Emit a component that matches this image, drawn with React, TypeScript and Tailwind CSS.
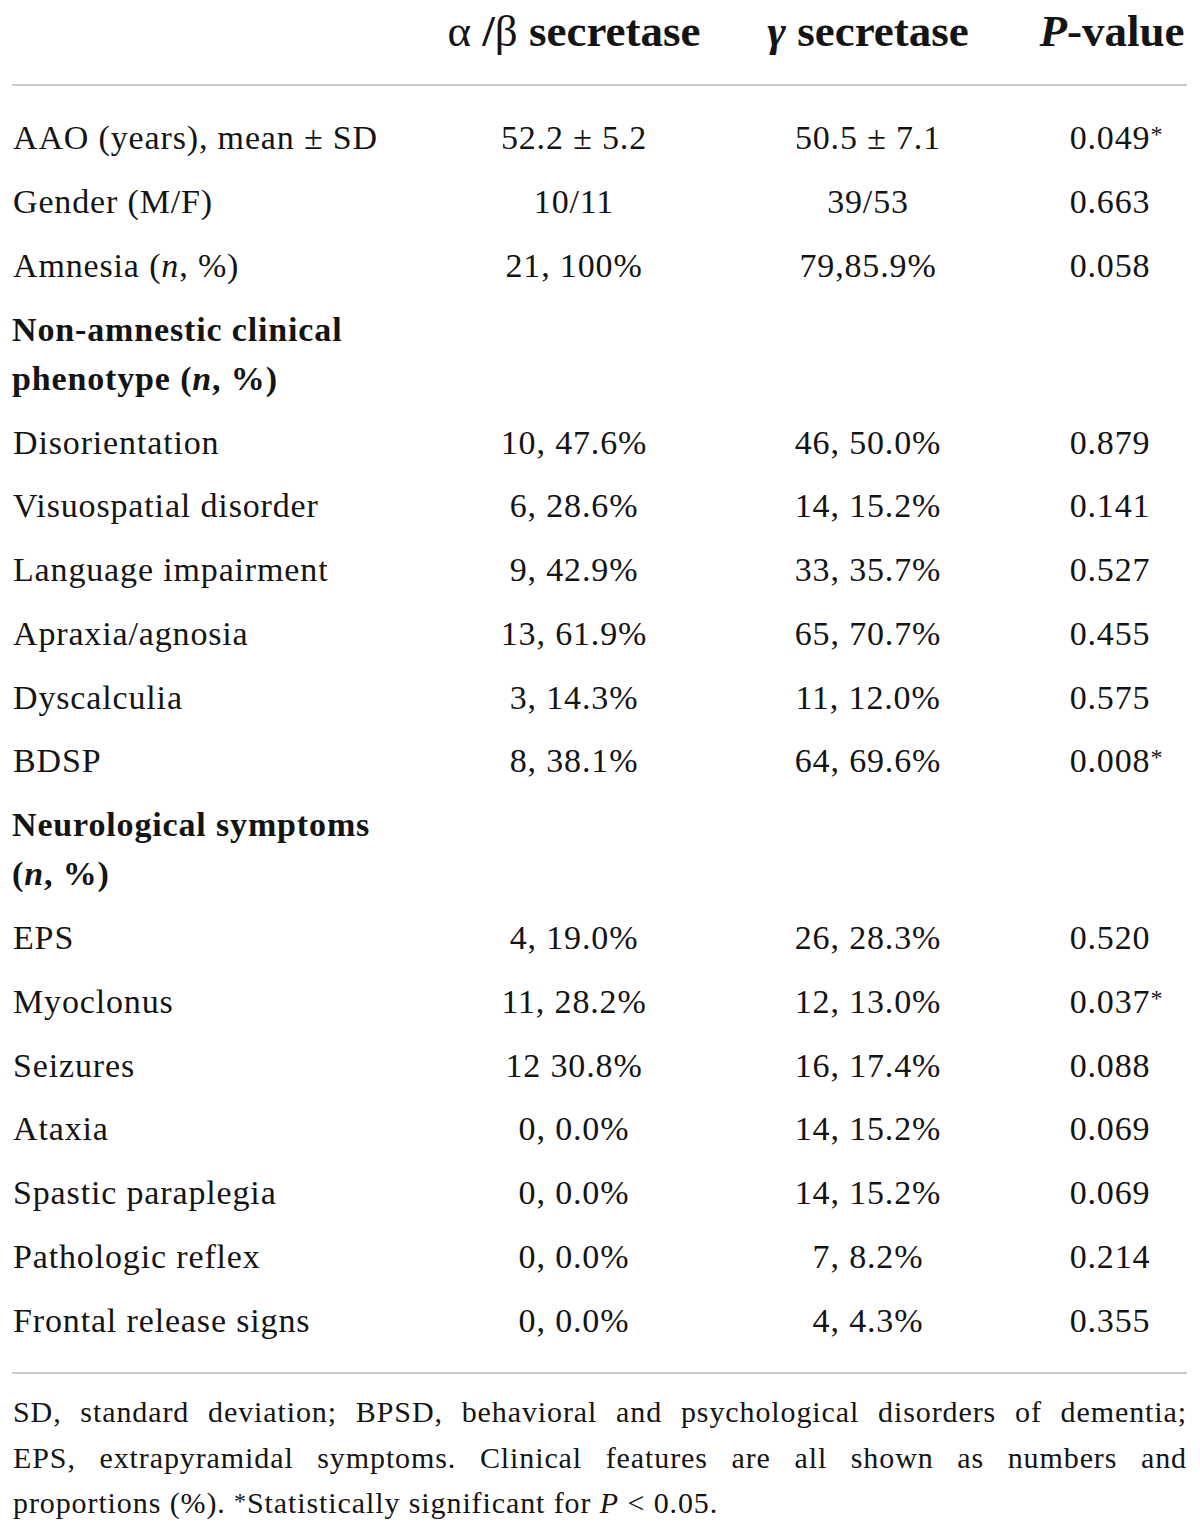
import React from "react";

type Row = {
  label: React.ReactNode;
  a?: string;
  b?: string;
  p?: string;
  star?: boolean;
  section?: boolean;
};

const N = () => <i>n</i>;

const rows: Row[] = [
  { label: "AAO (years), mean ± SD", a: "52.2 ± 5.2", b: "50.5 ± 7.1", p: "0.049", star: true },
  { label: "Gender (M/F)", a: "10/11", b: "39/53", p: "0.663" },
  { label: <>Amnesia (<N />, %)</>, a: "21, 100%", b: "79,85.9%", p: "0.058" },
  {
    label: (
      <>
        Non-amnestic clinical
        <br />
        phenotype (<N />, %)
      </>
    ),
    section: true,
  },
  { label: "Disorientation", a: "10, 47.6%", b: "46, 50.0%", p: "0.879" },
  { label: "Visuospatial disorder", a: "6, 28.6%", b: "14, 15.2%", p: "0.141" },
  { label: "Language impairment", a: "9, 42.9%", b: "33, 35.7%", p: "0.527" },
  { label: "Apraxia/agnosia", a: "13, 61.9%", b: "65, 70.7%", p: "0.455" },
  { label: "Dyscalculia", a: "3, 14.3%", b: "11, 12.0%", p: "0.575" },
  { label: "BDSP", a: "8, 38.1%", b: "64, 69.6%", p: "0.008", star: true },
  {
    label: (
      <>
        Neurological symptoms
        <br />
        (<N />, %)
      </>
    ),
    section: true,
  },
  { label: "EPS", a: "4, 19.0%", b: "26, 28.3%", p: "0.520" },
  { label: "Myoclonus", a: "11, 28.2%", b: "12, 13.0%", p: "0.037", star: true },
  { label: "Seizures", a: "12 30.8%", b: "16, 17.4%", p: "0.088" },
  { label: "Ataxia", a: "0, 0.0%", b: "14, 15.2%", p: "0.069" },
  { label: "Spastic paraplegia", a: "0, 0.0%", b: "14, 15.2%", p: "0.069" },
  { label: "Pathologic reflex", a: "0, 0.0%", b: "7, 8.2%", p: "0.214" },
  { label: "Frontal release signs", a: "0, 0.0%", b: "4, 4.3%", p: "0.355" },
];

export default function App() {
  return (
    <div
      className="w-[1200px] min-h-[1536px] bg-white pl-[12px] pr-[13px] text-[#141414]"
      style={{ fontFamily: '"Liberation Serif", "Times New Roman", serif' }}
    >
      {/* Header */}
      <div className="grid grid-cols-[433px_258px_330px_154px] pb-[21px] text-[45px] font-bold leading-[63px]">
        <div />
        <div className="whitespace-nowrap text-center">
          <span className="font-normal">α</span> /<span className="font-normal">β</span> secretase
        </div>
        <div className="whitespace-nowrap text-center">
          <i>γ</i> secretase
        </div>
        <div className="whitespace-nowrap pl-[4px] text-center">
          <i>P</i>-value
        </div>
      </div>
      <div className="h-[2px] bg-[#cbcbcb]" />

      {/* Body */}
      <div className="pb-[20px] pt-[20px] text-[34px] leading-[49px] tracking-[0.025em]">
        {rows.map((r, i) => (
          <div key={i} className="grid grid-cols-[433px_258px_330px_154px] py-[7.4px]">
            <div className={r.section ? "font-bold" : "pl-px"}>{r.label}</div>
            <div className="whitespace-nowrap text-center">{r.a}</div>
            <div className="whitespace-nowrap text-center">{r.b}</div>
            <div className="whitespace-nowrap text-center">
              {r.p && (
                <span className="relative">
                  {r.p}
                  {r.star && (
                    <span className="absolute left-full top-[-9px] text-[24px]">*</span>
                  )}
                </span>
              )}
            </div>
          </div>
        ))}
      </div>
      <div className="h-[2px] bg-[#cbcbcb]" />

      {/* Footnote */}
      <div className="pt-[15px] pl-px text-[30px] leading-[45.5px] tracking-[0.03em]">
        <div className="text-justify [text-align-last:justify]">
          SD, standard deviation; BPSD, behavioral and psychological disorders of dementia;
        </div>
        <div className="text-justify [text-align-last:justify]">
          EPS, extrapyramidal symptoms. Clinical features are all shown as numbers and
        </div>
        <div>
          proportions (%). <span className="relative top-[-4px] text-[24px]">*</span>Statistically significant for{" "}
          <i>P</i> &lt; 0.05.
        </div>
      </div>
    </div>
  );
}
